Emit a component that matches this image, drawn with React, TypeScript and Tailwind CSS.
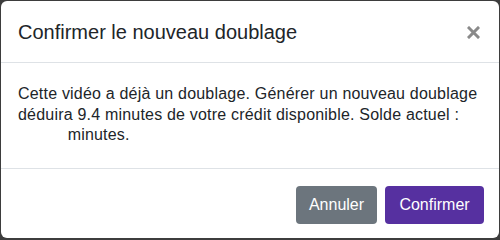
export default function App() {
    return (
        <div className="w-[500px] h-[240px] bg-[#3d3d3d] pt-px pl-px pr-px pb-[2px]" style={{ fontFamily: '"Liberation Sans", Arial, sans-serif' }}>
            <div className="h-full bg-white rounded-[6px] flex flex-col text-[#212529]">
                <div className="h-[62px] flex items-center justify-between pl-[17px] pr-[19px] border-b border-[#dee2e6]">
                    <h5 className="text-[20px] leading-[30px] pt-[1px]">Confirmer le nouveau doublage</h5>
                    <button className="w-[14px] h-[14px] flex items-center justify-center mt-[2px]" aria-label="Fermer">
                        <svg width="13" height="13" viewBox="0 0 13 13">
                            <path d="M2 2 L11 11 M11 2 L2 11" stroke="#8a8a8a" strokeWidth="3" strokeLinecap="square" />
                        </svg>
                    </button>
                </div>
                <div className="flex-1 px-[17px] pt-[21px] text-[16px] leading-[20.5px] tracking-[0.2px]">
                    Cette vidéo a déjà un doublage. Générer un nouveau doublage déduira 9.4 minutes de votre crédit disponible. Solde actuel : <span className="inline-block w-[45px]"></span> minutes.
                </div>
                <div className="h-[70px] border-t border-[#dee2e6] flex items-start justify-end gap-2 pt-[17px] pr-[15px]">
                    <button className="h-[38px] w-[81px] rounded-[4px] bg-[#6c757d] text-white text-[16px]">Annuler</button>
                    <button className="h-[38px] w-[99px] rounded-[4px] bg-[#5630a0] text-white text-[16px]">Confirmer</button>
                </div>
            </div>
        </div>
    );
}
